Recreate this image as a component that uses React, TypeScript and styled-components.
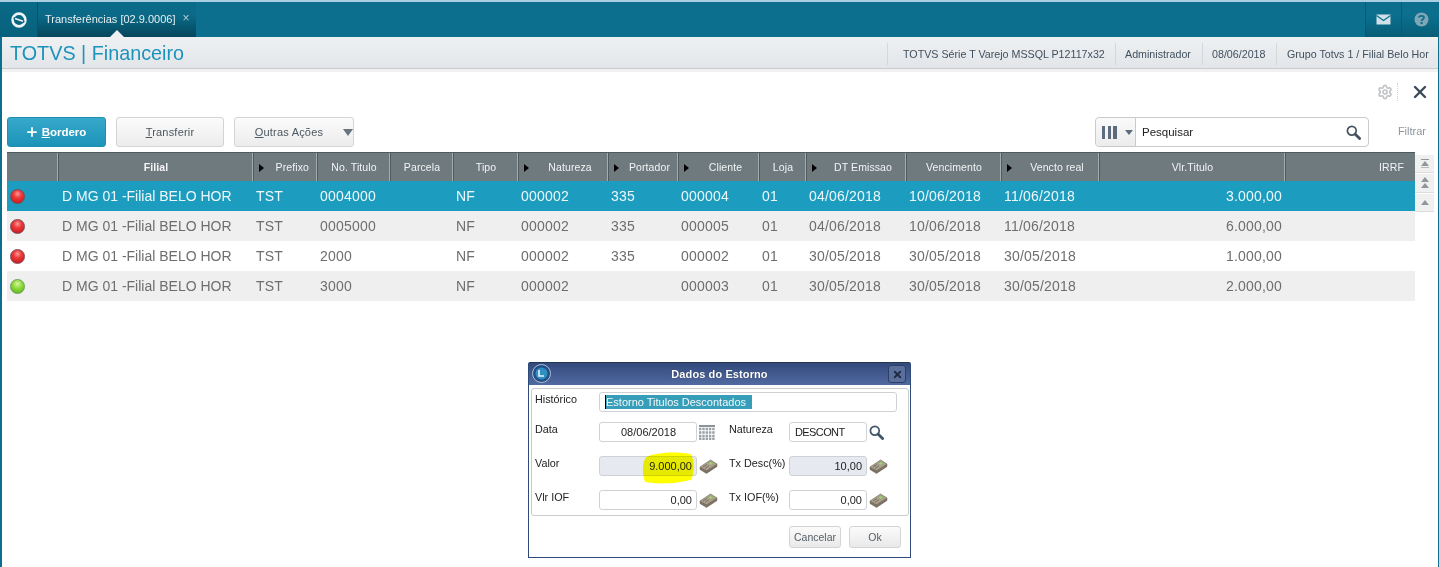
import React from "react";
import styled, { createGlobalStyle } from "styled-components";
import { Plus, X, Settings } from "lucide-react";

const Global = createGlobalStyle`
  html, body { margin: 0; padding: 0; background: #fff; }
  body { font-family: "Liberation Sans", Arial, sans-serif; overflow: hidden; }
  * { box-sizing: border-box; }
`;

const Page = styled.div`
  position: relative;
  width: 1439px;
  height: 567px;
  display: flex;
  flex-direction: column;
  background: #fff;
  overflow: hidden;
`;

const TopBar = styled.div`
  height: 37px;
  flex: none;
  display: flex;
  align-items: stretch;
  background: #0b6f8d;
  border-top: 2px solid #a9cfe0;
`;

const LogoCell = styled.div`
  width: 38px;
  flex: none;
  display: flex;
  align-items: center;
  justify-content: center;
  background: linear-gradient(#0a6a87, #07617c);
  border-right: 1px solid #0a5168;
`;

const ActiveTab = styled.div`
  position: relative;
  width: 158px;
  flex: none;
  display: flex;
  align-items: center;
  padding: 0 0 1px 7px;
  font-size: 11px;
  color: #e6eef1;
  white-space: nowrap;
  background: linear-gradient(#0a6a87 40%, #05465c);
  &::after {
    content: "";
    position: absolute;
    left: 72px;
    bottom: 0;
    border-left: 7px solid transparent;
    border-right: 7px solid transparent;
    border-bottom: 7px solid #edf0f2;
  }
`;

const TabClose = styled.span`
  margin-left: 7px;
  margin-top: -3px;
  font-size: 12px;
  color: #b5c9d1;
`;

const TopSpacer = styled.div`
  flex: 1;
`;

const TopIcon = styled.div`
  width: 36px;
  flex: none;
  display: flex;
  align-items: center;
  justify-content: center;
  background: linear-gradient(#0b6f8d 40%, #085d77);
  border-left: 1px solid #0a5a73;
`;

const TopIconWide = styled(TopIcon)`
  width: 38px;
  padding-left: 1px;
`;

const Body = styled.div`
  flex: 1;
  display: flex;
  flex-direction: column;
  border-left: 2px solid #0b6f8d;
  border-right: 1px solid #0b6f8d;
  min-height: 0;
`;

const Header = styled.div`
  height: 32px;
  flex: none;
  display: flex;
  align-items: center;
  justify-content: space-between;
  padding-top: 2px;
  background: linear-gradient(#eef0f2, #e3e6e9);
  border-bottom: 1px solid #c8ccd0;
`;

const Brand = styled.div`
  padding-left: 8px;
  font-size: 19.8px;
  color: #1c93bb;
`;

const Info = styled.div`
  display: flex;
  align-items: center;
  height: 22px;
  font-size: 10.7px;
  color: #41505e;
`;

const InfoCell = styled.div<{ $w: number; $l: number }>`
  width: ${(p) => p.$w}px;
  height: 22px;
  display: flex;
  align-items: center;
  padding-left: ${(p) => p.$l}px;
  border-left: 1px solid #d5d8db;
  white-space: nowrap;
`;

const HeaderGap = styled.div`
  height: 3px;
  flex: none;
  background: #f1f1f2;
`;

const ActionRow = styled.div`
  height: 45px;
  flex: none;
  display: flex;
  align-items: center;
  justify-content: flex-end;
  padding: 0 8px 6px 0;
`;

const GearWrap = styled.div`
  display: flex;
  align-items: center;
  height: 18px;
  padding-right: 4px;
  margin-right: 12px;
  border-right: 1px dotted #cfd3d6;
`;

const Toolbar = styled.div`
  height: 30px;
  flex: none;
  display: flex;
  align-items: stretch;
  padding-left: 5px;
  gap: 10px;
`;

const PrimaryButton = styled.div`
  width: 99px;
  display: flex;
  align-items: center;
  justify-content: center;
  gap: 3px;
  padding-right: 2px;
  font-size: 11.5px;
  font-weight: bold;
  color: #fff;
  border-radius: 3px;
  border: 1px solid #1c8fb2;
  background: linear-gradient(#37a9cb, #1b93b8);
`;

const Button = styled.div<{ $w: number }>`
  width: ${(p) => p.$w}px;
  position: relative;
  display: flex;
  align-items: center;
  justify-content: center;
  font-size: 11px;
  color: #4b5761;
  border-radius: 3px;
  border: 1px solid #d2d4d6;
  background: linear-gradient(#fbfbfb, #ececec);
  letter-spacing: 0.2px;
`;

const ButtonLabelShift = styled.span`
  margin-right: 10px;
`;

const Caret = styled.span`
  position: absolute;
  right: 0;
  top: 11px;
  border-left: 5px solid transparent;
  border-right: 5px solid transparent;
  border-top: 7px solid #69747c;
`;

const Key = styled.span`
  text-decoration: underline;
`;

const ToolbarSpacer = styled.div`
  flex: 1;
`;

const SearchBox = styled.div`
  width: 274px;
  display: flex;
  align-items: stretch;
  border: 1px solid #c8cacc;
  border-radius: 4px;
  background: #fff;
`;

const ColumnPicker = styled.div`
  width: 40px;
  flex: none;
  display: flex;
  align-items: center;
  gap: 8px;
  padding-left: 6px;
  background: linear-gradient(#fafafa, #ececec);
  border-right: 1px solid #c8cacc;
  border-radius: 4px 0 0 4px;
`;

const Bars = styled.span`
  width: 15px;
  height: 13px;
  flex: none;
  background: repeating-linear-gradient(90deg, #5c6b7d 0 3.5px, transparent 3.5px 5.75px);
`;

const SmallCaret = styled.span`
  border-left: 4px solid transparent;
  border-right: 4px solid transparent;
  border-top: 5px solid #5c6b7d;
`;

const SearchText = styled.div`
  flex: 1;
  display: flex;
  align-items: center;
  padding: 0 6px;
  font-size: 11.5px;
  color: #222;
`;

const SearchIcon = styled.div`
  display: flex;
  align-items: center;
  padding-right: 7px;
`;

const FilterLabel = styled.div`
  width: 59px;
  flex: none;
  text-align: right;
  padding-right: 12px;
  line-height: 28px;
  font-size: 11px;
  color: #8e979e;
`;

const GridArea = styled.div`
  flex: none;
  margin-top: 5px;
  display: flex;
  padding-left: 5px;
`;

const Table = styled.div`
  width: 1408px;
  flex: none;
`;

const HeaderRow = styled.div`
  height: 29px;
  display: flex;
  background: #6f7a7e;
  border-top: 1px solid #4e5a60;
`;

const HeadCell = styled.div<{ $w: number; $align?: string; $arrow?: boolean; $pr?: number; $bold?: boolean }>`
  width: ${(p) => p.$w}px;
  flex: none;
  position: relative;
  display: flex;
  align-items: center;
  justify-content: ${(p) => p.$align ?? "center"};
  padding: 0 ${(p) => p.$pr ?? 3}px 0 ${(p) => (p.$arrow ? 16 : 3)}px;
  border-right: 1px solid #4e5a60;
  box-shadow: inset -1px 0 0 #a4acaf;
  font-size: 10.5px;
  font-weight: ${(p) => (p.$bold ? "bold" : "normal")};
  letter-spacing: 0.1px;
  color: #f2f4f5;
  white-space: nowrap;
  &:last-child { border-right: 0; box-shadow: none; padding-right: 12px; }
`;

const SortMark = styled.span`
  position: absolute;
  left: 5px;
  top: 11px;
  border-top: 4px solid transparent;
  border-bottom: 4px solid transparent;
  border-left: 5px solid #000;
`;

const Row = styled.div<{ $kind: "sel" | "alt" | "plain" }>`
  height: 30px;
  display: flex;
  align-items: center;
  font-size: 14px;
  color: ${(p) => (p.$kind === "sel" ? "#eef8fb" : "#6e6e6e")};
  background: ${(p) => (p.$kind === "sel" ? "#1c9dbf" : p.$kind === "alt" ? "#efefef" : "#fff")};
`;

const Cell = styled.div<{ $w: number; $right?: boolean; $first?: boolean }>`
  width: ${(p) => p.$w}px;
  flex: none;
  padding: ${(p) => (p.$right ? "0 3px 0 0" : p.$first ? "0 0 0 4px" : "0 0 0 3px")};
  text-align: ${(p) => (p.$right ? "right" : "left")};
  letter-spacing: ${(p) => (p.$first ? "0" : "0.2px")};
  white-space: nowrap;
  overflow: hidden;
`;

const LedCell = styled.div`
  width: 51px;
  flex: none;
  display: flex;
  padding-left: 3px;
`;

const Led = styled.span<{ $color: "red" | "green" }>`
  width: 15px;
  height: 15px;
  border-radius: 50%;
  border: 1px solid ${(p) => (p.$color === "red" ? "#7d4a50" : "#6f9a5a")};
  background: ${(p) =>
    p.$color === "red"
      ? "radial-gradient(circle at 50% 30%, #ff9a9a 0, #ee3b3b 35%, #c5161f 90%)"
      : "radial-gradient(circle at 50% 30%, #d8f6a4 0, #8fdc3c 40%, #5fb41f 90%)"};
`;

const ScrollColumn = styled.div`
  width: 19px;
  flex: none;
  display: flex;
  flex-direction: column;
  gap: 1px;
  margin-top: 3px;
`;

const ScrollButton = styled.div<{ $h: number }>`
  height: ${(p) => p.$h}px;
  display: flex;
  align-items: center;
  justify-content: center;
  background: #f0f0f0;
  border-bottom: 1px solid #dcdcdc;
`;

const Dialog = styled.div`
  position: absolute;
  left: 528px;
  top: 362px;
  width: 383px;
  height: 196px;
  display: flex;
  flex-direction: column;
  background: #fff;
  border: 1px solid #2d4a78;
  border-top-color: #26384f;
  border-radius: 2px 2px 0 0;
`;

const DialogTitle = styled.div`
  position: relative;
  height: 22px;
  flex: none;
  display: flex;
  align-items: center;
  justify-content: center;
  font-size: 11px;
  font-weight: bold;
  letter-spacing: 0.1px;
  color: #fff;
  background: linear-gradient(#33497c, #516aa0);
  text-shadow: 0 0 1px #1c2a48;
`;

const DialogLogo = styled.div`
  position: absolute;
  left: 3px;
  top: 1px;
  width: 19px;
  height: 19px;
`;

const DialogClose = styled.div`
  position: absolute;
  right: 4px;
  top: 2px;
  width: 18px;
  height: 18px;
  display: flex;
  align-items: center;
  justify-content: center;
  border: 1px solid #2d3f63;
  border-radius: 3px;
  background: #5a6f9c;
`;

const Panel = styled.div`
  margin: 3px 1px 0 2px;
  height: 128px;
  flex: none;
  border: 1px solid #c9cccf;
  border-radius: 3px;
  display: grid;
  grid-template-columns: 67px 98px 32px 60px 78px 1fr;
  grid-template-rows: 30px 34px 34px 20px;
  padding: 3px 0 0;
  position: relative;
`;

const FieldLabel = styled.div`
  padding: 1px 0 0 3px;
  font-size: 10.8px;
  line-height: 13px;
  color: #222;
  white-space: nowrap;
`;

const FieldLabelRight = styled(FieldLabel)`
  padding-left: 0;
`;

const Input = styled.div<{ $span?: number; $ro?: boolean; $align?: string; $ls?: number }>`
  grid-column: ${(p) => (p.$span ? `span ${p.$span}` : "auto")};
  height: 20px;
  display: flex;
  align-items: center;
  justify-content: ${(p) => p.$align ?? "flex-end"};
  padding: 0 4px 0 5px;
  font-size: 11px;
  letter-spacing: ${(p) => p.$ls ?? 0}px;
  color: #1c1c1c;
  border: 1px solid #cfd2d5;
  border-radius: 3px;
  background: ${(p) => (p.$ro ? "#e6e9ef" : "#fff")};
  white-space: nowrap;
`;

const WideInput = styled(Input)`
  margin-right: 11px;
`;

const SelectedText = styled.span`
  width: 147px;
  line-height: 14px;
  background: #369eb8;
  color: #f2f8fa;
  border-left: 1px solid #000;
`;

const IconCell = styled.div`
  height: 20px;
  display: flex;
  align-items: center;
  padding-left: 2px;
`;

const Highlight = styled.svg`
  position: absolute;
  left: 110px;
  top: 62px;
  mix-blend-mode: multiply;
  pointer-events: none;
`;

const DialogFooter = styled.div`
  flex: 1;
  display: flex;
  justify-content: flex-end;
  align-items: flex-start;
  gap: 8px;
  padding: 10px 9px 0 0;
`;

const DialogButton = styled.div`
  width: 52px;
  height: 22px;
  display: flex;
  align-items: center;
  justify-content: center;
  font-size: 10.5px;
  color: #555f66;
  border: 1px solid #d2d4d6;
  border-radius: 3px;
  background: linear-gradient(#fbfbfb, #e9e9e9);
`;

const Logo = () => (
  <svg width="18" height="18" viewBox="0 0 18 18" fill="none">
    <circle cx="9" cy="9" r="6.4" stroke="#eef5f7" strokeWidth="2.6" />
    <path d="M3.6 7.2 L14.4 10.8" stroke="#0a6785" strokeWidth="2.4" />
    <path d="M5 7.6 L13 10.3" stroke="#eef5f7" strokeWidth="1.6" />
  </svg>
);

const Envelope = () => (
  <svg width="15" height="11" viewBox="0 0 15 11">
    <rect x="0.5" y="0.5" width="14" height="10" fill="#cfe0e7" />
    <path d="M0.5 1.5 L7.5 6.5 L14.5 1.5" fill="none" stroke="#0b6f8d" strokeWidth="1.1" />
  </svg>
);

const Help = () => (
  <svg width="15" height="15" viewBox="0 0 15 15">
    <circle cx="7.5" cy="7.5" r="7" fill="#7ea6b7" />
    <path d="M5 5.6 C5 3.2 10 3.2 10 5.6 C10 7.2 7.6 7.2 7.6 9" stroke="#0b6f8d" strokeWidth="1.8" fill="none" />
    <rect x="6.6" y="10" width="2" height="2" fill="#0b6f8d" />
  </svg>
);

const Magnifier = ({ color, size }: { color: string; size: number }) => (
  <svg width={size} height={size} viewBox="0 0 15 15" fill="none">
    <circle cx="5.8" cy="5.8" r="4.4" stroke={color} strokeWidth="1.7" />
    <path d="M9 9 L13.6 13.6" stroke={color} strokeWidth="2.8" strokeLinecap="round" />
  </svg>
);

const Money = () => (
  <svg width="19" height="15" viewBox="0 0 19 15">
    <path d="M1 8 L1 10.5 L7.5 14.5 L18 7.5 L18 5 L7.5 11.5 Z" fill="#7c7163" stroke="#6a6052" strokeWidth="0.5" />
    <path d="M1 8 L11.5 1 L18 5 L7.5 11.5 Z" fill="#ada28f" stroke="#7d7364" strokeWidth="0.7" />
    <path d="M9 4.4 L11.6 2.8 L14.4 4.6 L11.8 6.2 Z" fill="#a6d07a" stroke="#6f8a58" strokeWidth="0.3" />
    <path d="M4 8 L8 5.5 M6 9.4 L10 6.8" stroke="#6f6658" strokeWidth="0.9" />
  </svg>
);

const CalendarGrid = () => (
  <svg width="16" height="15" viewBox="0 0 16 15">
    <rect y="0" width="16" height="2" fill="#8c939a" />
    <path d="M0 4h16M0 7.5h16M0 11h16M0 14h16" stroke="#9aa0a6" strokeWidth="2.4" strokeDasharray="2.4 .9" />
  </svg>
);

const GlobeMini = () => (
  <svg width="19" height="19" viewBox="0 0 19 19">
    <circle cx="9.5" cy="9.5" r="9" fill="#234e86" stroke="#a9c0d8" strokeWidth="1" />
    <circle cx="9.5" cy="9.5" r="6" fill="#2f8fc0" />
    <path d="M7 6v6h5" stroke="#e7f3fa" strokeWidth="1.6" fill="none" />
  </svg>
);

const ScrollGlyph = ({ bar, dbl }: { bar?: boolean; dbl?: boolean }) => (
  <svg width="10" height="12" viewBox="0 0 10 12" fill="#8f979c">
    {bar && <rect x="1" y="1" width="8" height="1" />}
    <path d={dbl ? "M5 0 L9 5 L1 5 Z" : "M5 3 L9 8 L1 8 Z"} />
    {dbl && <path d="M5 6 L9 11 L1 11 Z" />}
    {bar && <rect x="1" y="9" width="8" height="1" fill="#b5babd" />}
  </svg>
);

type Col = { name: string; w: number; arrow?: boolean; align?: string; pr?: number; bold?: boolean };
const cols: Col[] = [
  { name: "", w: 52 },
  { name: "Filial", w: 195, bold: true },
  { name: "Prefixo", w: 64, arrow: true, align: "flex-end", pr: 8 },
  { name: "No. Titulo", w: 73 },
  { name: "Parcela", w: 63 },
  { name: "Tipo", w: 65 },
  { name: "Natureza", w: 90, arrow: true },
  { name: "Portador", w: 70, arrow: true, align: "flex-end", pr: 8 },
  { name: "Cliente", w: 81, arrow: true },
  { name: "Loja", w: 47 },
  { name: "DT Emissao", w: 100, arrow: true },
  { name: "Vencimento", w: 95 },
  { name: "Vencto real", w: 98, arrow: true },
  { name: "Vlr.Titulo", w: 186 },
  { name: "IRRF", w: 130, align: "flex-end" },
];

type DataRow = {
  led: "red" | "green";
  kind: "sel" | "alt" | "plain";
  vals: string[];
};
const rows: DataRow[] = [
  { led: "red", kind: "sel", vals: ["D MG 01 -Filial BELO HOR", "TST", "0004000", "", "NF", "000002", "335", "000004", "01", "04/06/2018", "10/06/2018", "11/06/2018", "3.000,00"] },
  { led: "red", kind: "alt", vals: ["D MG 01 -Filial BELO HOR", "TST", "0005000", "", "NF", "000002", "335", "000005", "01", "04/06/2018", "10/06/2018", "11/06/2018", "6.000,00"] },
  { led: "red", kind: "plain", vals: ["D MG 01 -Filial BELO HOR", "TST", "2000", "", "NF", "000002", "335", "000002", "01", "30/05/2018", "30/05/2018", "30/05/2018", "1.000,00"] },
  { led: "green", kind: "alt", vals: ["D MG 01 -Filial BELO HOR", "TST", "3000", "", "NF", "000002", "", "000003", "01", "30/05/2018", "30/05/2018", "30/05/2018", "2.000,00"] },
];

export default function App() {
  return (
    <Page>
      <Global />
      <TopBar>
        <LogoCell><Logo /></LogoCell>
        <ActiveTab>
          Transferências [02.9.0006]
          <TabClose>×</TabClose>
        </ActiveTab>
        <TopSpacer />
        <TopIcon><Envelope /></TopIcon>
        <TopIconWide><Help /></TopIconWide>
      </TopBar>
      <Body>
        <Header>
          <Brand>TOTVS | Financeiro</Brand>
          <Info>
            <InfoCell $w={228} $l={15}>TOTVS Série T Varejo MSSQL P12117x32</InfoCell>
            <InfoCell $w={87} $l={9}>Administrador</InfoCell>
            <InfoCell $w={74} $l={9}>08/06/2018</InfoCell>
            <InfoCell $w={162} $l={10}>Grupo Totvs 1 / Filial Belo Hor</InfoCell>
          </Info>
        </Header>
        <HeaderGap />
        <ActionRow>
          <GearWrap><Settings size={16} color="#c2c5c8" strokeWidth={2.6} /></GearWrap>
          <X size={20} color="#3c4b5c" strokeWidth={2.9} />
        </ActionRow>
        <Toolbar>
          <PrimaryButton>
            <Plus size={14} strokeWidth={3} />
            <span><Key>B</Key>ordero</span>
          </PrimaryButton>
          <Button $w={108}><span><Key>T</Key>ransferir</span></Button>
          <Button $w={120}>
            <ButtonLabelShift><Key>O</Key>utras Ações</ButtonLabelShift>
            <Caret />
          </Button>
          <ToolbarSpacer />
          <SearchBox>
            <ColumnPicker><Bars /><SmallCaret /></ColumnPicker>
            <SearchText>Pesquisar</SearchText>
            <SearchIcon><Magnifier color="#45525e" size={15} /></SearchIcon>
          </SearchBox>
          <FilterLabel>Filtrar</FilterLabel>
        </Toolbar>
        <GridArea>
          <Table>
            <HeaderRow>
              {cols.map((c) => (
                <HeadCell key={c.name || "led"} $w={c.w} $align={c.align} $arrow={c.arrow} $pr={c.pr} $bold={c.bold}>
                  {c.arrow && <SortMark />}
                  {c.name}
                </HeadCell>
              ))}
            </HeaderRow>
            {rows.map((r, i) => (
              <Row key={i} $kind={r.kind}>
                <LedCell><Led $color={r.led} /></LedCell>
                {r.vals.map((v, j) => (
                  <Cell key={j} $w={cols[j + 1].w} $right={j === 12} $first={j === 0}>{v}</Cell>
                ))}
              </Row>
            ))}
          </Table>
          <ScrollColumn>
            <ScrollButton $h={18}><ScrollGlyph bar /></ScrollButton>
            <ScrollButton $h={19}><ScrollGlyph dbl /></ScrollButton>
            <ScrollButton $h={18}><ScrollGlyph /></ScrollButton>
          </ScrollColumn>
        </GridArea>
      </Body>

      <Dialog>
        <DialogTitle>
          <DialogLogo><GlobeMini /></DialogLogo>
          Dados do Estorno
          <DialogClose><X size={11} color="#1d2b44" strokeWidth={4} /></DialogClose>
        </DialogTitle>
        <Panel>
          <FieldLabel>Histórico</FieldLabel>
          <WideInput $span={5} $align="flex-start"><SelectedText>Estorno Titulos Descontados</SelectedText></WideInput>

          <FieldLabel>Data</FieldLabel>
          <Input $align="center">08/06/2018</Input>
          <IconCell><CalendarGrid /></IconCell>
          <FieldLabelRight>Natureza</FieldLabelRight>
          <Input $align="flex-start" $ls={-0.6}>DESCONT</Input>
          <IconCell><Magnifier color="#3f5568" size={15} /></IconCell>

          <FieldLabel>Valor</FieldLabel>
          <Input $ro>9.000,00</Input>
          <IconCell><Money /></IconCell>
          <FieldLabelRight>Tx Desc(%)</FieldLabelRight>
          <Input $ro>10,00</Input>
          <IconCell><Money /></IconCell>

          <FieldLabel>Vlr IOF</FieldLabel>
          <Input>0,00</Input>
          <IconCell><Money /></IconCell>
          <FieldLabelRight>Tx IOF(%)</FieldLabelRight>
          <Input>0,00</Input>
          <IconCell><Money /></IconCell>

          <Highlight width="53" height="34" viewBox="0 0 54 34">
            <path d="M4 6 C14 1 36 0 50 3 C54 10 53 24 50 29 C36 33 14 34 3 31 C0 22 0 12 4 6 Z" fill="#ffff00" />
          </Highlight>
        </Panel>
        <DialogFooter>
          <DialogButton>Cancelar</DialogButton>
          <DialogButton>Ok</DialogButton>
        </DialogFooter>
      </Dialog>
    </Page>
  );
}
